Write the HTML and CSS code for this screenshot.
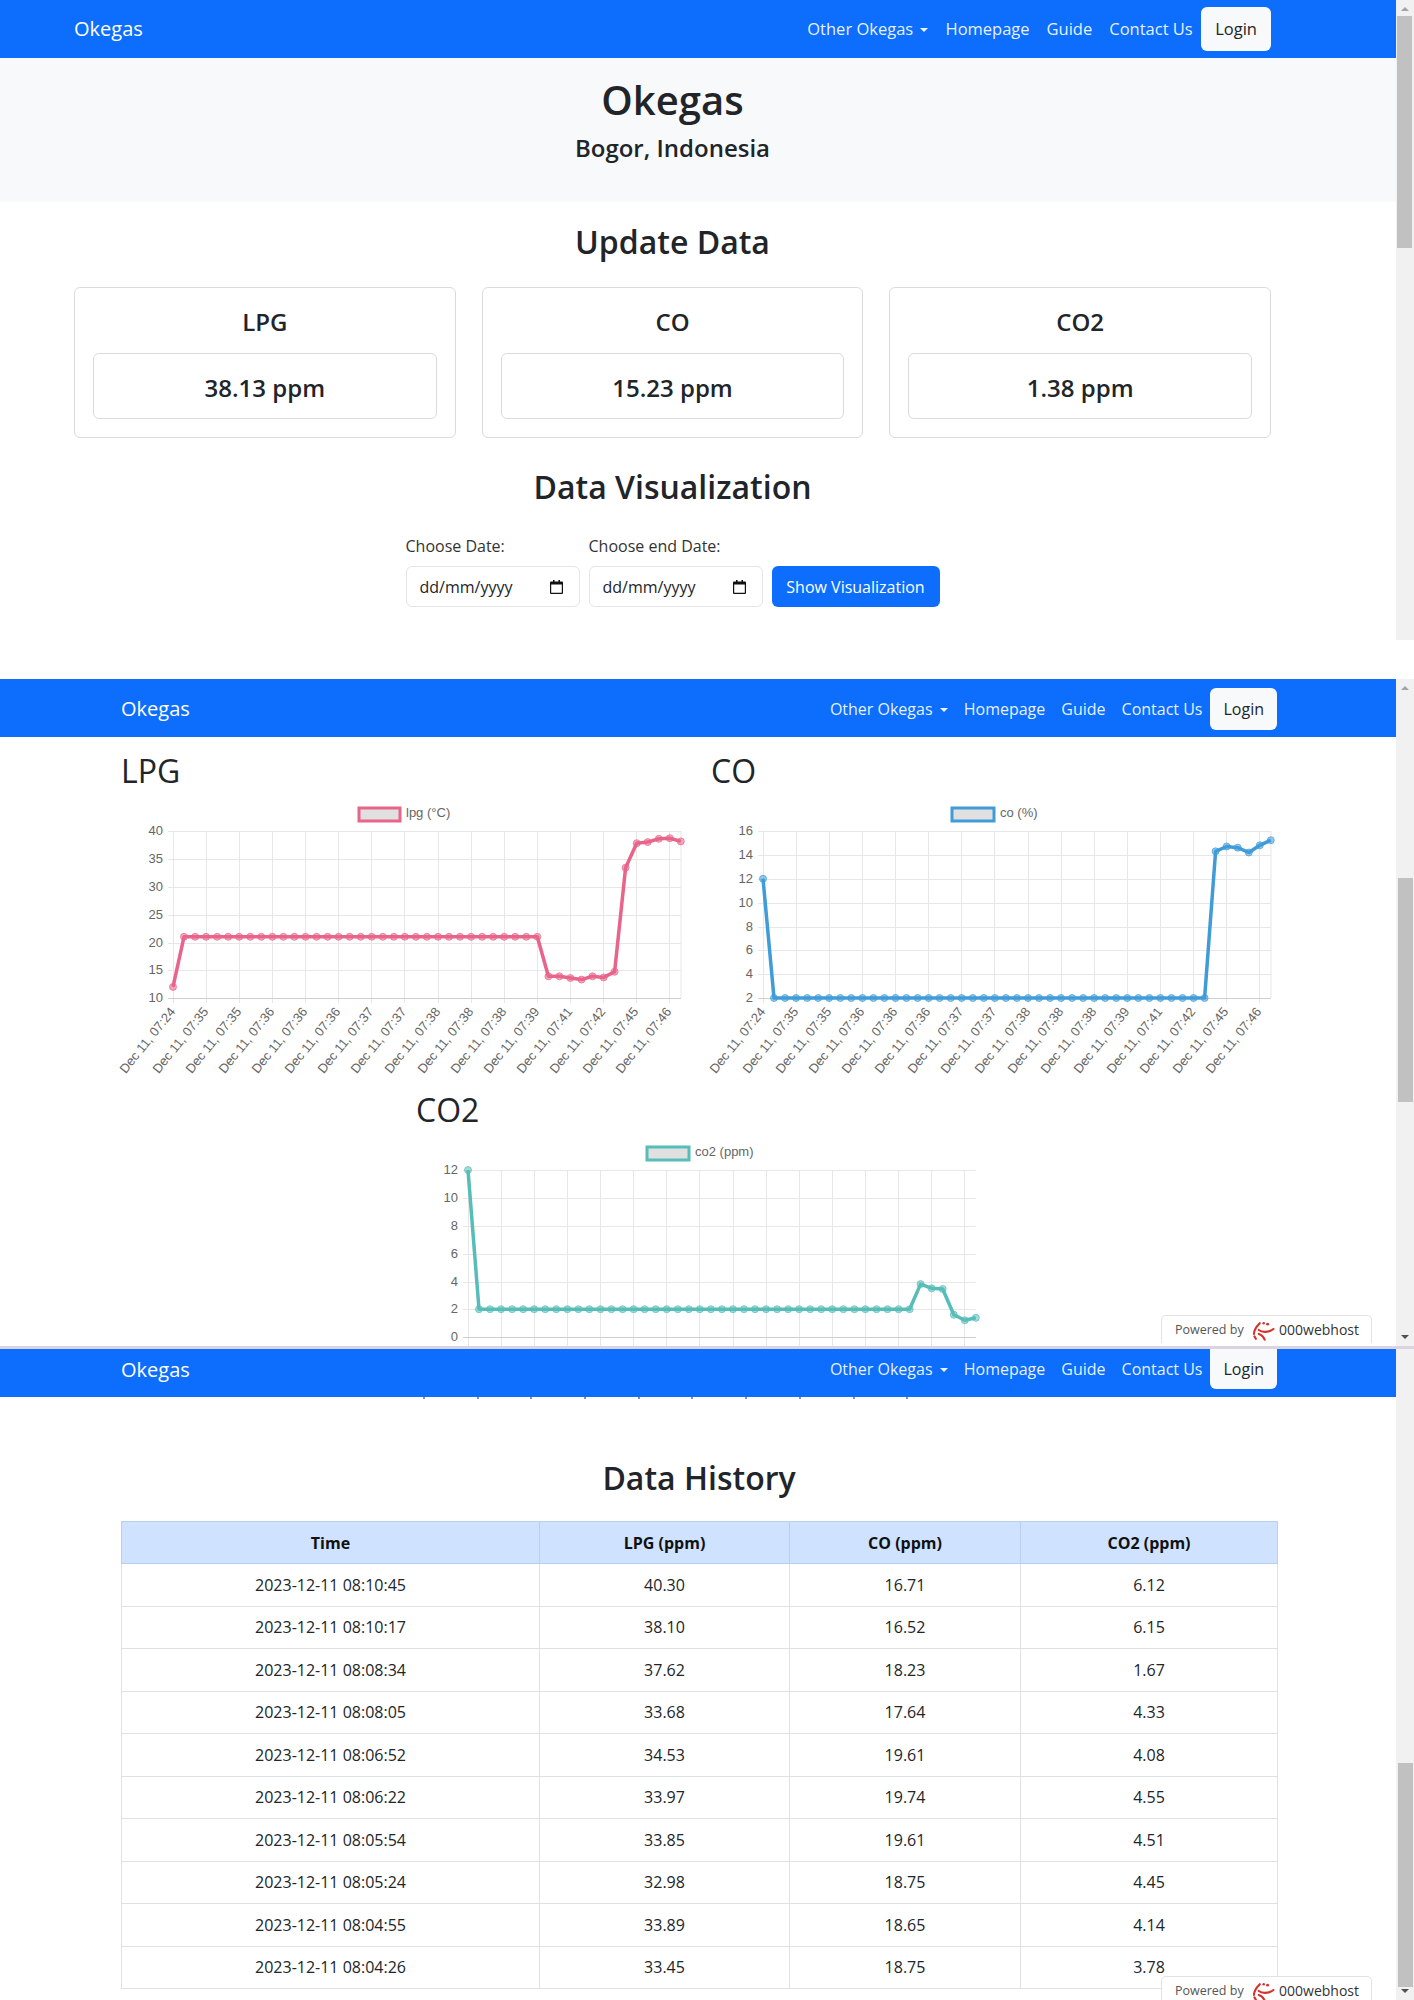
FILE: index.html
```html
<!DOCTYPE html>
<html lang="en">
<head>
<meta charset="utf-8">
<title>Okegas</title>
<link rel="stylesheet" href="styles.css">
</head>
<body>

<section class="shot shot-one">
  <div class="shot-main">
    <nav class="navbar navbar-one">
      <a class="brand">Okegas</a>
      <div class="nav-links">
        <a class="nav-link">Other Okegas <span class="caret"></span></a>
        <a class="nav-link">Homepage</a>
        <a class="nav-link">Guide</a>
        <a class="nav-link">Contact Us</a>
        <a class="login">Login</a>
      </div>
    </nav>
    <header class="hero">
      <h1>Okegas</h1>
      <p class="hero-sub">Bogor, Indonesia</p>
    </header>
    <div class="container-one">
      <h2 class="section-title title-update">Update Data</h2>
      <div class="cards">
        <div class="card"><h3>LPG</h3><div class="reading">38.13 ppm</div></div>
        <div class="card"><h3>CO</h3><div class="reading">15.23 ppm</div></div>
        <div class="card"><h3>CO2</h3><div class="reading">1.38 ppm</div></div>
      </div>
      <h2 class="section-title title-vis">Data Visualization</h2>
      <form class="date-form">
        <div class="field">
          <label>Choose Date:</label>
          <div class="date-input"><span>dd/mm/yyyy</span>
            <svg class="cal" viewBox="0 0 13 14"><path d="M3 0h1.500v1.500h4V0H10v1.500h2a1 1 0 0 1 1 1V13a1 1 0 0 1-1 1H1a1 1 0 0 1-1-1V2.500a1 1 0 0 1 1-1h2zM1.200 4.500v8.300h10.600V4.500z"/></svg>
          </div>
        </div>
        <div class="field">
          <label>Choose end Date:</label>
          <div class="date-input"><span>dd/mm/yyyy</span>
            <svg class="cal" viewBox="0 0 13 14"><path d="M3 0h1.500v1.500h4V0H10v1.500h2a1 1 0 0 1 1 1V13a1 1 0 0 1-1 1H1a1 1 0 0 1-1-1V2.500a1 1 0 0 1 1-1h2zM1.200 4.500v8.300h10.600V4.500z"/></svg>
          </div>
        </div>
        <button class="btn-show" type="button">Show Visualization</button>
      </form>
    </div>
  </div>
  <aside class="scrollbar"><span class="arrow-up"></span><span class="thumb thumb-one"></span></aside>
</section>

<section class="shot shot-two">
  <div class="shot-main">
    <nav class="navbar navbar-wide">
      <a class="brand">Okegas</a>
      <div class="nav-links">
        <a class="nav-link">Other Okegas <span class="caret"></span></a>
        <a class="nav-link">Homepage</a>
        <a class="nav-link">Guide</a>
        <a class="nav-link">Contact Us</a>
        <a class="login">Login</a>
      </div>
    </nav>
    <div class="charts">
      <div class="chart">
        <h2 class="chart-title">LPG</h2>
        <svg class="plot" viewBox="0 0 570 285">
          <defs><marker id="dot-lpg" markerWidth="10" markerHeight="10" refX="5" refY="5" markerUnits="userSpaceOnUse"><circle class="dot-lpg" cx="5" cy="5" r="3.500"/></marker></defs>
          <rect class="legend-box stroke-lpg" x="238" y="13" width="41" height="13"/>
          <text class="legend-text" x="285" y="22">lpg (°C)</text>
          <path class="grid" d="M52.500 36V208M85.500 36V208M118.500 36V208M151.500 36V208M184.500 36V208M217.500 36V208M250.500 36V208M283.500 36V208M317.500 36V208M350.500 36V208M383.500 36V208M416.500 36V208M449.500 36V208M482.500 36V208M515.500 36V208M548.500 36V208M560 36V203"/>
          <path class="grid" d="M47 36.500H560M47 64.500H560M47 92.500H560M47 120.500H560M47 148.500H560M47 175.500H560"/>
          <path class="axis" d="M47 203.500H560"/>
          <text class="tick-y" x="42" y="40">40</text><text class="tick-y" x="42" y="68">35</text><text class="tick-y" x="42" y="96">30</text><text class="tick-y" x="42" y="124">25</text><text class="tick-y" x="42" y="152">20</text><text class="tick-y" x="42" y="179">15</text><text class="tick-y" x="42" y="207">10</text>
          <g>
            <text class="tick-x" transform="translate(55 217) rotate(-51)">Dec 11, 07:24</text>
            <text class="tick-x" transform="translate(88 217) rotate(-51)">Dec 11, 07:35</text>
            <text class="tick-x" transform="translate(121 217) rotate(-51)">Dec 11, 07:35</text>
            <text class="tick-x" transform="translate(154 217) rotate(-51)">Dec 11, 07:36</text>
            <text class="tick-x" transform="translate(187 217) rotate(-51)">Dec 11, 07:36</text>
            <text class="tick-x" transform="translate(220 217) rotate(-51)">Dec 11, 07:36</text>
            <text class="tick-x" transform="translate(253 217) rotate(-51)">Dec 11, 07:37</text>
            <text class="tick-x" transform="translate(286 217) rotate(-51)">Dec 11, 07:37</text>
            <text class="tick-x" transform="translate(320 217) rotate(-51)">Dec 11, 07:38</text>
            <text class="tick-x" transform="translate(353 217) rotate(-51)">Dec 11, 07:38</text>
            <text class="tick-x" transform="translate(386 217) rotate(-51)">Dec 11, 07:38</text>
            <text class="tick-x" transform="translate(419 217) rotate(-51)">Dec 11, 07:39</text>
            <text class="tick-x" transform="translate(452 217) rotate(-51)">Dec 11, 07:41</text>
            <text class="tick-x" transform="translate(485 217) rotate(-51)">Dec 11, 07:42</text>
            <text class="tick-x" transform="translate(518 217) rotate(-51)">Dec 11, 07:45</text>
            <text class="tick-x" transform="translate(551 217) rotate(-51)">Dec 11, 07:46</text>
          </g>
          <polyline class="line stroke-lpg" marker-start="url(#dot-lpg)" marker-mid="url(#dot-lpg)" marker-end="url(#dot-lpg)" points="52,191.900 63,141.800 74.100,141.800 85.100,141.800 96.200,141.800 107.200,141.800 118.200,141.800 129.300,141.800 140.300,141.800 151.400,141.800 162.400,141.800 173.400,141.800 184.500,141.800 195.500,141.800 206.600,141.800 217.600,141.800 228.600,141.800 239.700,141.800 250.700,141.800 261.800,141.800 272.800,141.800 283.800,141.800 294.900,141.800 305.900,141.800 317,141.800 328,141.800 339,141.800 350.100,141.800 361.100,141.800 372.200,141.800 383.200,141.800 394.200,141.800 405.300,141.800 416.300,141.800 427.400,181.300 438.400,181.300 449.400,183 460.500,184.600 471.500,181.300 482.600,182.400 493.600,176.800 504.600,72.700 515.700,48.200 526.700,47.100 537.800,43.800 548.800,43.200 559.800,46.400"/>
        </svg>
      </div>
      <div class="chart">
        <h2 class="chart-title">CO</h2>
        <svg class="plot" viewBox="0 0 570 285">
          <defs><marker id="dot-co" markerWidth="10" markerHeight="10" refX="5" refY="5" markerUnits="userSpaceOnUse"><circle class="dot-co" cx="5" cy="5" r="3.500"/></marker></defs>
          <rect class="legend-box stroke-co" x="241" y="13" width="42" height="13"/>
          <text class="legend-text" x="289" y="22">co (%)</text>
          <path class="grid" d="M52.500 36V208M85.500 36V208M118.500 36V208M151.500 36V208M184.500 36V208M217.500 36V208M250.500 36V208M283.500 36V208M317.500 36V208M350.500 36V208M383.500 36V208M416.500 36V208M449.500 36V208M482.500 36V208M515.500 36V208M548.500 36V208M560 36V203"/>
          <path class="grid" d="M47 36.500H560M47 60.500H560M47 84.500H560M47 108.500H560M47 132.500H560M47 155.500H560M47 179.500H560"/>
          <path class="axis" d="M47 203.500H560"/>
          <text class="tick-y" x="42" y="40">16</text><text class="tick-y" x="42" y="64">14</text><text class="tick-y" x="42" y="88">12</text><text class="tick-y" x="42" y="112">10</text><text class="tick-y" x="42" y="136">8</text><text class="tick-y" x="42" y="159">6</text><text class="tick-y" x="42" y="183">4</text><text class="tick-y" x="42" y="207">2</text>
          <g>
            <text class="tick-x" transform="translate(55 217) rotate(-51)">Dec 11, 07:24</text>
            <text class="tick-x" transform="translate(88 217) rotate(-51)">Dec 11, 07:35</text>
            <text class="tick-x" transform="translate(121 217) rotate(-51)">Dec 11, 07:35</text>
            <text class="tick-x" transform="translate(154 217) rotate(-51)">Dec 11, 07:36</text>
            <text class="tick-x" transform="translate(187 217) rotate(-51)">Dec 11, 07:36</text>
            <text class="tick-x" transform="translate(220 217) rotate(-51)">Dec 11, 07:36</text>
            <text class="tick-x" transform="translate(253 217) rotate(-51)">Dec 11, 07:37</text>
            <text class="tick-x" transform="translate(286 217) rotate(-51)">Dec 11, 07:37</text>
            <text class="tick-x" transform="translate(320 217) rotate(-51)">Dec 11, 07:38</text>
            <text class="tick-x" transform="translate(353 217) rotate(-51)">Dec 11, 07:38</text>
            <text class="tick-x" transform="translate(386 217) rotate(-51)">Dec 11, 07:38</text>
            <text class="tick-x" transform="translate(419 217) rotate(-51)">Dec 11, 07:39</text>
            <text class="tick-x" transform="translate(452 217) rotate(-51)">Dec 11, 07:41</text>
            <text class="tick-x" transform="translate(485 217) rotate(-51)">Dec 11, 07:42</text>
            <text class="tick-x" transform="translate(518 217) rotate(-51)">Dec 11, 07:45</text>
            <text class="tick-x" transform="translate(551 217) rotate(-51)">Dec 11, 07:46</text>
          </g>
          <polyline class="line stroke-co" marker-start="url(#dot-co)" marker-mid="url(#dot-co)" marker-end="url(#dot-co)" points="52,83.700 63,203 74.100,203 85.100,203 96.200,203 107.200,203 118.200,203 129.300,203 140.300,203 151.400,203 162.400,203 173.400,203 184.500,203 195.500,203 206.600,203 217.600,203 228.600,203 239.700,203 250.700,203 261.800,203 272.800,203 283.800,203 294.900,203 305.900,203 317,203 328,203 339,203 350.100,203 361.100,203 372.200,203 383.200,203 394.200,203 405.300,203 416.300,203 427.400,203 438.400,203 449.400,203 460.500,203 471.500,203 482.600,203 493.600,203 504.600,56.300 515.700,51.500 526.700,52.700 537.800,57.500 548.800,50.300 559.800,45.200"/>
        </svg>
      </div>
      <div class="chart chart-wide">
        <h2 class="chart-title">CO2</h2>
        <svg class="plot plot-cut" viewBox="0 0 570 212">
          <defs><marker id="dot-co2" markerWidth="10" markerHeight="10" refX="5" refY="5" markerUnits="userSpaceOnUse"><circle class="dot-co2" cx="5" cy="5" r="3.500"/></marker></defs>
          <rect class="legend-box stroke-co2" x="231" y="13" width="42" height="13"/>
          <text class="legend-text" x="279" y="22">co2 (ppm)</text>
          <path class="grid" d="M52.500 36V212M85.500 36V212M118.500 36V212M151.500 36V212M184.500 36V212M217.500 36V212M250.500 36V212M283.500 36V212M317.500 36V212M350.500 36V212M383.500 36V212M416.500 36V212M449.500 36V212M482.500 36V212M515.500 36V212M548.500 36V212"/>
          <path class="grid" d="M47 36.500H560M47 64.500H560M47 92.500H560M47 120.500H560M47 148.500H560M47 175.500H560"/>
          <path class="axis" d="M47 203.500H560"/>
          <text class="tick-y" x="42" y="40">12</text><text class="tick-y" x="42" y="68">10</text><text class="tick-y" x="42" y="96">8</text><text class="tick-y" x="42" y="124">6</text><text class="tick-y" x="42" y="152">4</text><text class="tick-y" x="42" y="179">2</text><text class="tick-y" x="42" y="207">0</text>
          <polyline class="line stroke-co2" marker-start="url(#dot-co2)" marker-mid="url(#dot-co2)" marker-end="url(#dot-co2)" points="52,36 63,175.200 74.100,175.200 85.100,175.200 96.200,175.200 107.200,175.200 118.200,175.200 129.300,175.200 140.300,175.200 151.400,175.200 162.400,175.200 173.400,175.200 184.500,175.200 195.500,175.200 206.600,175.200 217.600,175.200 228.600,175.200 239.700,175.200 250.700,175.200 261.800,175.200 272.800,175.200 283.800,175.200 294.900,175.200 305.900,175.200 317,175.200 328,175.200 339,175.200 350.100,175.200 361.100,175.200 372.200,175.200 383.200,175.200 394.200,175.200 405.300,175.200 416.300,175.200 427.400,175.200 438.400,175.200 449.400,175.200 460.500,175.200 471.500,175.200 482.600,175.200 493.600,175.200 504.600,150.100 515.700,154.300 526.700,155 537.800,180.700 548.800,186.300 559.800,183.800"/>
        </svg>
      </div>
    </div>
  </div>
  <aside class="scrollbar"><span class="arrow-up"></span><span class="thumb thumb-two"></span><span class="arrow-down"></span></aside>
  <div class="badge badge-two">
    <span class="badge-powered">Powered by</span>
    <svg class="badge-logo" viewBox="0 0 26 22"><path class="swirl" d="M9 4C5 8 3 12 3 15M3.500 17.500L5 20"/><path class="swirl" d="M8 11c3 2.500 10 3 15-1"/><path class="swirl" d="M8 15c3 1 5 3 6 6"/><circle class="swirl-dot" cx="13" cy="4" r="1.300"/><circle class="swirl-dot" cx="17" cy="5" r="1.500"/></svg>
    <span class="badge-name">000webhost</span>
  </div>
</section>

<section class="shot shot-three">
  <div class="shot-main">
    <nav class="navbar navbar-wide navbar-short">
      <a class="brand">Okegas</a>
      <div class="nav-links">
        <a class="nav-link">Other Okegas <span class="caret"></span></a>
        <a class="nav-link">Homepage</a>
        <a class="nav-link">Guide</a>
        <a class="nav-link">Contact Us</a>
        <a class="login">Login</a>
      </div>
    </nav>
    <div class="cut-ticks"><i></i><i></i><i></i><i></i><i></i><i></i><i></i><i></i><i></i><i></i></div>
    <div class="container-wide">
      <h2 class="section-title title-history">Data History</h2>
      <table class="history">
        <thead>
          <tr><th class="col-time">Time</th><th class="col-lpg">LPG (ppm)</th><th class="col-co">CO (ppm)</th><th class="col-co2">CO2 (ppm)</th></tr>
        </thead>
        <tbody>
          <tr><td>2023-12-11 08:10:45</td><td>40.30</td><td>16.71</td><td>6.12</td></tr>
          <tr><td>2023-12-11 08:10:17</td><td>38.10</td><td>16.52</td><td>6.15</td></tr>
          <tr><td>2023-12-11 08:08:34</td><td>37.62</td><td>18.23</td><td>1.67</td></tr>
          <tr><td>2023-12-11 08:08:05</td><td>33.68</td><td>17.64</td><td>4.33</td></tr>
          <tr><td>2023-12-11 08:06:52</td><td>34.53</td><td>19.61</td><td>4.08</td></tr>
          <tr><td>2023-12-11 08:06:22</td><td>33.97</td><td>19.74</td><td>4.55</td></tr>
          <tr><td>2023-12-11 08:05:54</td><td>33.85</td><td>19.61</td><td>4.51</td></tr>
          <tr><td>2023-12-11 08:05:24</td><td>32.98</td><td>18.75</td><td>4.45</td></tr>
          <tr><td>2023-12-11 08:04:55</td><td>33.89</td><td>18.65</td><td>4.14</td></tr>
          <tr><td>2023-12-11 08:04:26</td><td>33.45</td><td>18.75</td><td>3.78</td></tr>
        </tbody>
      </table>
    </div>
  </div>
  <aside class="scrollbar"><span class="thumb thumb-three"></span><span class="arrow-down"></span></aside>
  <div class="badge badge-three">
    <span class="badge-powered">Powered by</span>
    <svg class="badge-logo" viewBox="0 0 26 22"><path class="swirl" d="M9 4C5 8 3 12 3 15M3.500 17.500L5 20"/><path class="swirl" d="M8 11c3 2.500 10 3 15-1"/><path class="swirl" d="M8 15c3 1 5 3 6 6"/><circle class="swirl-dot" cx="13" cy="4" r="1.300"/><circle class="swirl-dot" cx="17" cy="5" r="1.500"/></svg>
    <span class="badge-name">000webhost</span>
  </div>
</section>

</body>
</html>
```
FILE: styles.css
```css
* { box-sizing: border-box; }

html, body { margin: 0; padding: 0; background: #fff; }

body {
  width: 1414px;
  height: 2000px;
  overflow: hidden;
  font-family: "Open Sans", "Noto Sans", sans-serif;
  font-size: 16px;
  line-height: 24px;
  color: #212529;
}

h1, h2, h3, p { margin: 0; font-weight: 600; }

.shot { position: relative; display: flex; overflow: hidden; }
.shot-one { height: 640px; margin-bottom: 39px; }
.shot-two { height: 667px; }
.shot-three { height: 654px; border-top: 3px solid #dcd3e2; }
.shot-main { flex: 1 1 auto; min-width: 0; }

/* navbar */
.navbar {
  display: flex;
  justify-content: space-between;
  align-items: center;
  height: 58px;
  background: #0d6efd;
}
.navbar-one { padding: 0 125px 0 74px; }
.navbar-wide { padding: 2px 119px 0 121px; }
.navbar-short { height: 48px; padding-top: 0; align-items: flex-start; }
.brand { color: #fff; font-size: 20px; line-height: 30px; }
.navbar-short .brand { line-height: 42px; }
.nav-links { display: flex; align-items: center; }
.nav-link { padding: 0 8px; color: rgba(255, 255, 255, 0.92); white-space: nowrap; }
.navbar-one .nav-link { padding: 0 8.500px; font-size: 16.500px; }
.caret {
  display: inline-block;
  margin-left: 3px;
  vertical-align: 3px;
  border-top: 4.800px solid currentColor;
  border-left: 4.800px solid transparent;
  border-right: 4.800px solid transparent;
}
.login {
  padding: 9px 13px;
  border-radius: 6px;
  background: #f8f9fa;
  color: #212529;
}
.navbar-one .login { padding: 10px 14px; font-size: 16.500px; }
.navbar-short .nav-links { align-self: flex-start; }
.navbar-short .nav-link { line-height: 40px; }
.navbar-short .login { padding: 8px 13px; border-radius: 0 0 6px 6px; }

/* hero */
.hero {
  padding: 18px 125px 40px 74px;
  background: #f8f9fa;
  text-align: center;
}
.hero h1 { font-size: 40px; line-height: 48px; }
.hero-sub { margin-top: 9px; font-size: 24px; line-height: 29px; }

/* panel one content */
.container-one { padding: 0 125px 0 74px; }
.section-title { font-size: 32px; line-height: 38px; text-align: center; }
.title-update { margin-top: 21px; margin-bottom: 26px; }
.title-vis { margin-top: 30px; margin-bottom: 28px; }

.cards { display: grid; grid-template-columns: repeat(3, 1fr); gap: 26px; }
.card {
  padding: 19px 18px 18px;
  border: 1px solid #d9dbde;
  border-radius: 6px;
  text-align: center;
}
.card h3 { font-size: 24px; line-height: 29px; }
.reading {
  display: flex;
  align-items: center;
  justify-content: center;
  height: 66px;
  margin-top: 17px;
  padding-top: 3px;
  border: 1px solid #d9dbde;
  border-radius: 6px;
  font-size: 24px;
  font-weight: 600;
}

.date-form { display: flex; justify-content: center; align-items: flex-end; gap: 9px; }
.field { display: flex; flex-direction: column; gap: 8px; width: 174px; }
.field label { font-size: 16px; line-height: 24px; color: #333; }
.date-input {
  display: flex;
  align-items: center;
  justify-content: space-between;
  height: 41px;
  padding: 0 16px 0 13px;
  border: 1px solid #e3e5e8;
  border-radius: 6px;
  background: #fff;
}
.cal { width: 13px; height: 14px; fill: #111; }
.btn-show {
  height: 41px;
  width: 168px;
  padding: 0;
  border: 0;
  border-radius: 6px;
  background: #0d6efd;
  color: #fff;
  font: inherit;
}

/* scrollbars */
.scrollbar {
  position: relative;
  flex: 0 0 18px;
  display: flex;
  flex-direction: column;
  background: #f1f1f1;
}
.arrow-up, .arrow-down {
  position: absolute;
  left: 5px;
  border-left: 4px solid transparent;
  border-right: 4px solid transparent;
}
.arrow-up { top: 7px; border-bottom: 4px solid #a3a3a3; }
.arrow-down { bottom: 7px; border-top: 4px solid #505050; }
.thumb { display: block; width: 15px; height: 224px; margin-left: 2px; background: #c1c1c1; }
.thumb-one { margin-left: 1px; margin-top: 16px; height: 232px; }
.thumb-two { margin-top: 199px; }
.thumb-three { margin-top: 414px; }

/* charts */
.charts {
  display: grid;
  grid-template-columns: 570px 570px;
  column-gap: 20px;
  padding: 15px 0 0 121px;
}
.chart-wide { grid-column: 1 / -1; width: 570px; margin: 11px 0 0 295px; }
.chart-title { font-size: 32px; line-height: 38px; margin-bottom: 5px; font-weight: 500; }
.plot { display: block; width: 570px; height: 285px; overflow: visible; }
.plot-cut { height: 212px; overflow: hidden; }
.grid { fill: none; stroke: #e7e7e7; stroke-width: 1; }
.axis { fill: none; stroke: #cfcfcf; stroke-width: 1; }
.line { fill: none; stroke-width: 3.500; stroke-linejoin: round; }
.legend-box { fill: #e0e0e0; stroke-width: 3; }
.stroke-lpg { stroke: #e8648a; }
.stroke-co { stroke: #409cd9; }
.stroke-co2 { stroke: #57bdb8; }
.dot-lpg { fill: #e8648a; fill-opacity: 0.55; stroke: #e8648a; stroke-opacity: 0.7; stroke-width: 1; }
.dot-co { fill: #409cd9; fill-opacity: 0.55; stroke: #409cd9; stroke-opacity: 0.7; stroke-width: 1; }
.dot-co2 { fill: #57bdb8; fill-opacity: 0.55; stroke: #57bdb8; stroke-opacity: 0.7; stroke-width: 1; }
.legend-text, .tick-y, .tick-x { font-family: "Liberation Sans", Arial, sans-serif; font-size: 13px; fill: #666; }
.tick-y, .tick-x { text-anchor: end; }

/* panel three */
.cut-ticks { display: flex; gap: 51.700px; height: 2px; padding-left: 423px; }
.cut-ticks i { display: block; width: 2px; height: 2px; background: #8a8f98; }
.container-wide { padding: 0 119px 0 121px; }
.title-history { margin-top: 60px; margin-bottom: 24px; }

.history { width: 1156px; table-layout: fixed; border-collapse: collapse; text-align: center; }
.history th, .history td { padding: 0; border: 1px solid #dee2e6; vertical-align: middle; }
.history th { height: 42px; background: #cfe2ff; border-color: #b9cfee; font-weight: 700; color: #111; }
.history td { height: 42.500px; }
.col-time { width: 418px; }
.col-lpg { width: 250px; }
.col-co { width: 231px; }
.col-co2 { width: 257px; }

/* hosting badge */
.badge {
  position: absolute;
  left: 1161px;
  display: flex;
  align-items: center;
  width: 211px;
  height: 28px;
  padding: 0 12px 0 13px;
  border: 1px solid #e3e3e3;
  border-bottom: 0;
  border-radius: 5px 5px 0 0;
  background: #fff;
  white-space: nowrap;
}
.badge-two { bottom: 3px; }
.badge-three { bottom: 0; height: 24px; padding-top: 5px; }
.badge-powered { font-size: 12.500px; color: #555; }
.badge-logo { width: 26px; height: 22px; margin: 0 3px 0 7px; fill: none; }
.swirl { fill: none; stroke: #d4332b; stroke-width: 2.200; stroke-linecap: round; }
.swirl-dot { fill: #d4332b; }
.badge-name { font-size: 14px; color: #333; }
```
